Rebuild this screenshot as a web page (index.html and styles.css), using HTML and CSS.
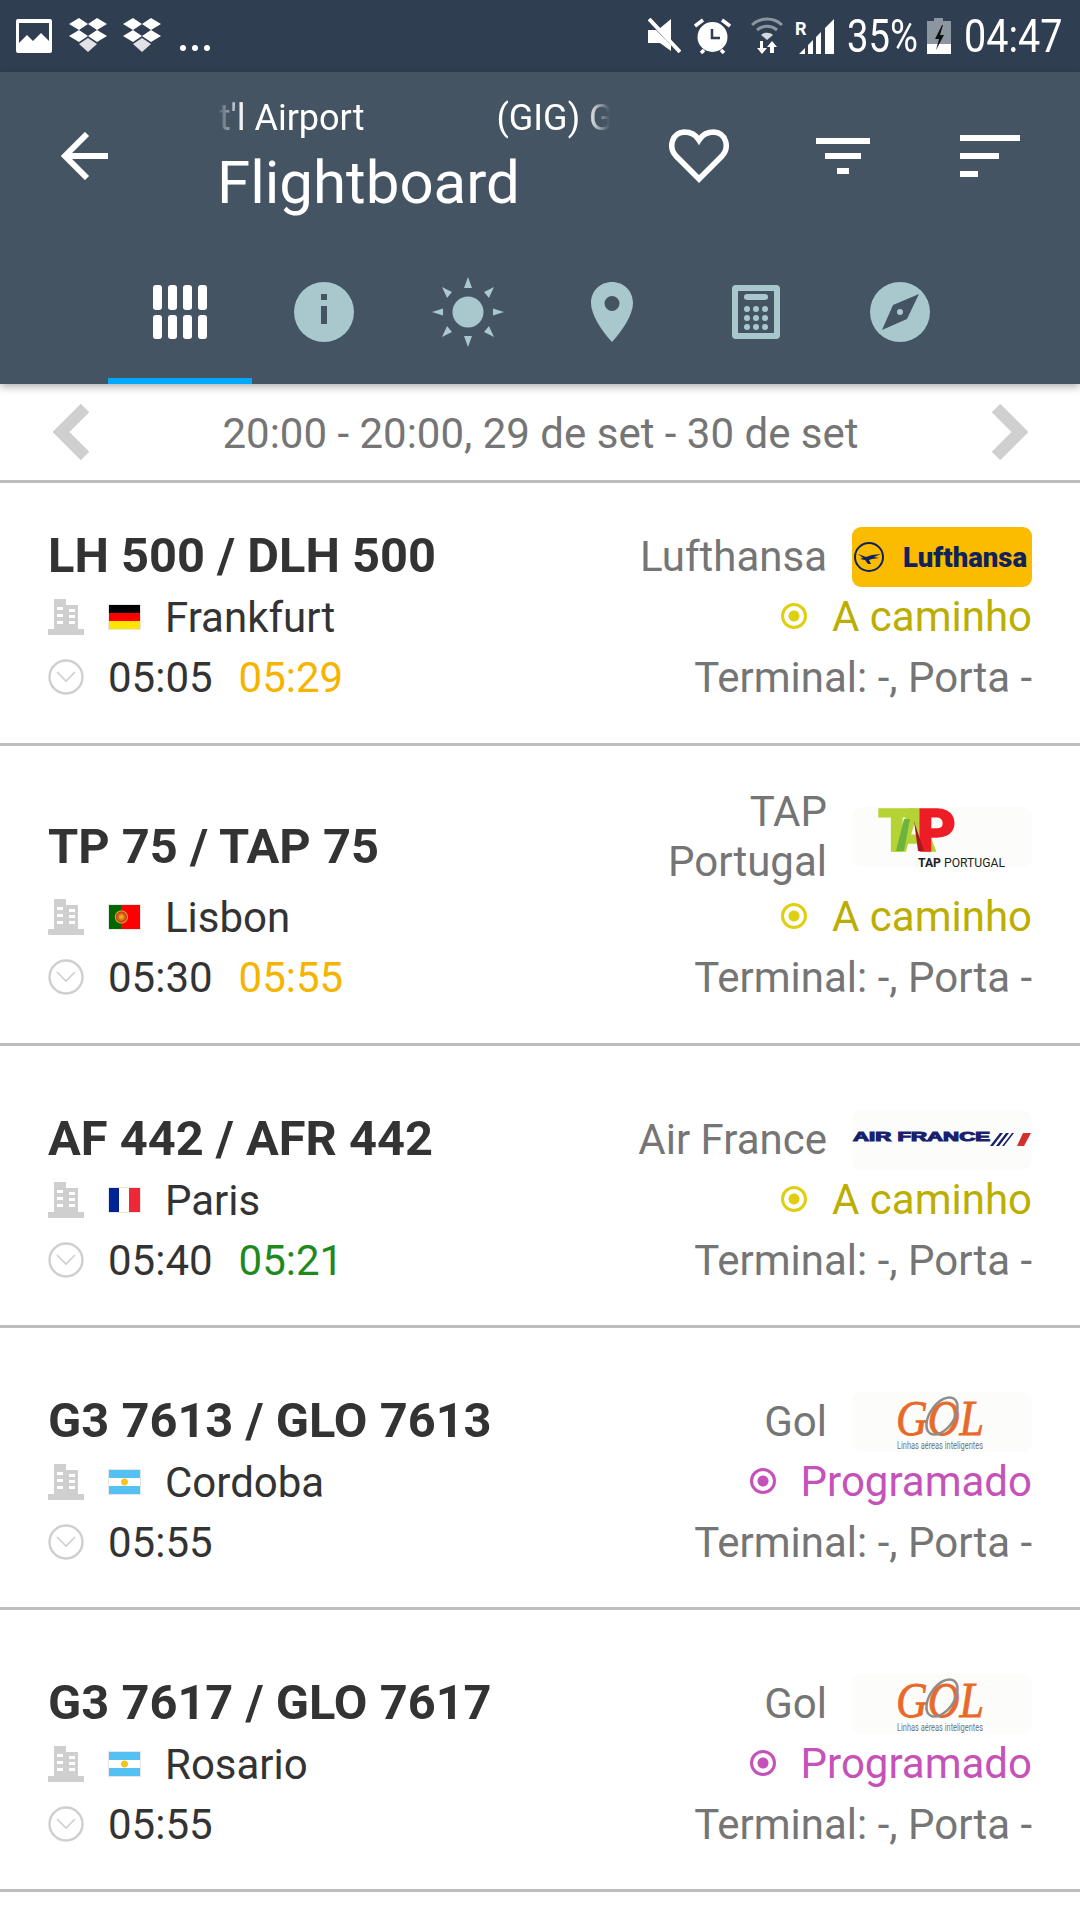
FILE: index.html
```html
<!DOCTYPE html>
<html lang="pt">
<head>
    <meta charset="UTF-8">
    <meta name="viewport" content="width=device-width, initial-scale=1.0">
    <title>Flightboard</title>
    <link rel="stylesheet" href="styles.css">
</head>
<body>
    <svg class="sprites" width="0" height="0">
        <symbol id="building" viewBox="0 0 36 36">
            <path fill="#cfcfcf" fill-rule="evenodd" d="M6 0h12v6h12v24h6v6H0v-6h6zM9 8v3h6V8zM9 15v3h6v-3zM21 10v3h6v-3zM9 22v3h6v-3zM21 16v3h6v-3zM21 22v3h6v-3z"/>
        </symbol>
        <symbol id="clock" viewBox="0 0 36 36">
            <circle cx="18" cy="18" r="16.500" fill="none" stroke="#cfcfcf" stroke-width="2.400"/>
            <path d="M9 13l9 9 9-9" fill="none" stroke="#cfcfcf" stroke-width="1.600"/>
        </symbol>
        <symbol id="dropbox" viewBox="0 0 38 36">
            <path fill="#fff" d="M10 0l9 6-9 6-10-6zM28 0l10 6-10 6-9-6zM10 12l9 6-9 6-10-6zM28 12l10 6-10 6-9-6z"/>
            <path fill="#fff" opacity=".85" d="M10 26l9-6 9 6-9 8z"/>
        </symbol>
    </svg>

    <div class="status-bar">
        <div class="status-group">
            <svg class="status-icon" width="36" height="34" viewBox="0 0 36 34"><path fill="#fff" fill-rule="evenodd" d="M2 0h32a2 2 0 0 1 2 2v30a2 2 0 0 1-2 2H2a2 2 0 0 1-2-2V2a2 2 0 0 1 2-2zM3 4v20l8-8 6 6 8-8 8 8V4z"/></svg>
            <svg class="status-icon status-gap" width="38" height="36"><use href="#dropbox"/></svg>
            <svg class="status-icon status-gap-small" width="38" height="36"><use href="#dropbox"/></svg>
            <span class="status-dots"><i></i><i></i><i></i></span>
        </div>
        <div class="status-group">
            <svg width="33" height="36" viewBox="0 0 33 36"><path fill="#fff" d="M23 1v22L11 11zM0 12h8l15 15v6l-11-8H0z"/><path stroke="#fff" stroke-width="4" d="M1 1l31 33"/></svg>
            <svg class="alarm" width="37" height="36" viewBox="0 0 37 36"><circle cx="18.500" cy="19" r="15" fill="#fff"/><path stroke="#fff" stroke-width="3.500" d="M1 8l8-6M36 8l-8-6M7 35l3-3M30 35l-3-3"/><path fill="none" stroke="#2f3e50" stroke-width="2.500" d="M18 11v9h8"/></svg>
            <svg class="wifi" width="32" height="38" viewBox="0 0 32 38"><path fill="none" stroke="#8c96a1" stroke-width="3" d="M1 8c8-8 22-8 30 0M6 13c6-5 14-5 20 0"/><path fill="#d5d8dc" d="M10 18c3-3 9-3 12 0l-6 5z"/><path fill="#fff" d="M9 24h3v7h4l-5 6-5-6h3zM21 24l5 6h-3v6h-4v-6h-3z"/></svg>
            <span class="roaming">R</span>
            <svg class="signal" width="36" height="36" viewBox="0 0 36 36"><path fill="#fff" d="M0 36l6-6v6zM9 36v-9l5-5v14zM17 36V19l5-5v22zM26 36V10l9-9v35z"/></svg>
            <span class="status-text status-battery">35%</span>
            <svg class="battery" width="24" height="36" viewBox="0 0 24 36"><path fill="#8c96a1" d="M7 0h9v3h8v33H0V3h7z"/><path fill="#fff" d="M0 26h24v10H0z"/><path fill="#111" d="M15 7l-7 14h4l-3 11 8-15h-4l3-10z"/></svg>
            <span class="status-text status-time">04:47</span>
        </div>
    </div>

    <div class="toolbar">
        <div class="app-header">
            <div class="icon-slot back-slot">
                <svg width="48" height="48" viewBox="0 0 48 48"><path fill="none" stroke="#fff" stroke-width="6" d="M48 24H5M27 2L5 24l22 22"/></svg>
            </div>
            <div class="title-block">
                <div class="subtitle"><div class="subtitle-text">Int'l Airport<span class="subtitle-code">(GIG) Galeão</span></div></div>
                <div class="title">Flightboard</div>
            </div>
            <div class="icon-slot heart-slot">
                <svg width="60" height="54" viewBox="0 0 60 54"><path fill="none" stroke="#fff" stroke-width="5.500" d="M30 50L7 27C-1 18 3 4 15 3c7 0 12 3 15 8 3-5 8-8 15-8 12 1 16 15 8 24z"/></svg>
            </div>
            <div class="icon-slot filter-slot">
                <svg width="54" height="36" viewBox="0 0 54 36"><path fill="#fff" d="M0 0h54v6H0zM9 15h36v6H9zM21 30h12v6H21z"/></svg>
            </div>
            <div class="icon-slot sort-slot">
                <svg width="60" height="42" viewBox="0 0 60 42"><path fill="#fff" d="M0 0h60v6H0zM0 18h39v6H0zM0 36h18v6H0z"/></svg>
            </div>
        </div>
        <div class="tabs">
            <div class="tab tab-active">
                <svg width="72" height="72" viewBox="0 0 72 72"><g fill="#fff"><rect x="9" y="9" width="9" height="25" rx="3"/><rect x="24" y="9" width="9" height="25" rx="3"/><rect x="39" y="9" width="9" height="25" rx="3"/><rect x="54" y="9" width="9" height="25" rx="3"/><rect x="9" y="39" width="9" height="24" rx="3"/><rect x="24" y="39" width="9" height="24" rx="3"/><rect x="39" y="39" width="9" height="24" rx="3"/><rect x="54" y="39" width="9" height="24" rx="3"/></g></svg>
            </div>
            <div class="tab">
                <svg width="72" height="72" viewBox="0 0 72 72"><circle cx="36" cy="36" r="30" fill="#a9c8ce"/><path fill="#445463" d="M33 18h6v6h-6zM33 30h6v18h-6z"/></svg>
            </div>
            <div class="tab">
                <svg width="72" height="72" viewBox="0 0 72 72"><g fill="#a9c8ce"><circle cx="36" cy="36" r="15.500"/><path d="M36 1l4 11h-8zM36 71l-4-11h8zM0 36l11-3.500v7zM72 36l-11 3.500v-7zM10 11l10 5-5 6zM62 11l-5 11-5-6zM10 61l5-11 5 6zM62 61l-10-5 5-6z"/></g></svg>
            </div>
            <div class="tab">
                <svg width="72" height="72" viewBox="0 0 72 72"><path fill="#a9c8ce" fill-rule="evenodd" d="M36 6c12 0 21 9 21 21 0 12-11 28-21 39C26 55 15 39 15 27 15 15 24 6 36 6zm0 14a7.500 7.500 0 1 0 0 15 7.500 7.500 0 0 0 0-15z"/></svg>
            </div>
            <div class="tab">
                <svg width="72" height="72" viewBox="0 0 72 72"><path fill="#a9c8ce" fill-rule="evenodd" d="M16 9h40a4 4 0 0 1 4 4v46a4 4 0 0 1-4 4H16a4 4 0 0 1-4-4V13a4 4 0 0 1 4-4zm2 6v42h36V15z"/><rect x="24" y="18" width="24" height="6" rx="3" fill="#a9c8ce"/><g fill="#a9c8ce"><circle cx="27" cy="33" r="3"/><circle cx="36" cy="33" r="3"/><circle cx="45" cy="33" r="3"/><circle cx="27" cy="42" r="3"/><circle cx="36" cy="42" r="3"/><circle cx="45" cy="42" r="3"/><circle cx="27" cy="51" r="3"/><circle cx="36" cy="51" r="3"/><circle cx="45" cy="51" r="3"/></g></svg>
            </div>
            <div class="tab">
                <svg width="72" height="72" viewBox="0 0 72 72"><circle cx="36" cy="36" r="30" fill="#a9c8ce"/><path fill="#445463" fill-rule="evenodd" d="M55 18l-12 25-25 11 11-25zM36 33a3 3 0 1 0 0 6 3 3 0 0 0 0-6z"/></svg>
            </div>
        </div>
    </div>

    <div class="date-bar">
        <svg width="36" height="56" viewBox="0 0 36 56"><path fill="none" stroke="#cfcfcf" stroke-width="12" d="M32 4L8 28l24 24"/></svg>
        <div class="date-range">20:00 - 20:00, 29 de set - 30 de set</div>
        <svg width="36" height="56" viewBox="0 0 36 56"><path fill="none" stroke="#cfcfcf" stroke-width="12" d="M4 4l24 24L4 52"/></svg>
    </div>

    <div class="flight-list">
        <div class="flight flight-first">
            <div class="flight-number">LH 500 / DLH 500</div>
            <div class="airline">
                <span class="airline-name">Lufthansa</span>
                <svg class="logo" width="180" height="60" viewBox="0 0 180 60">
                    <rect width="180" height="60" rx="9" fill="#fbbc00"/>
                    <circle cx="17" cy="30" r="14" fill="none" stroke="#10225c" stroke-width="2"/>
                    <path fill="#10225c" d="M6 27l8 3 6-2 9-1-7 3 5 1-7 1-3 1 2 4-3 0-3-4-5-1 3-1z"/>
                    <text x="51" y="40" font-family="Roboto" font-weight="900" font-size="27" fill="#10225c" textLength="124" lengthAdjust="spacingAndGlyphs">Lufthansa</text>
                </svg>
            </div>
            <div class="flight-line">
                <svg class="line-icon" width="36" height="36"><use href="#building"/></svg>
                <span class="flag flag-de"></span>
                <span>Frankfurt</span>
            </div>
            <div class="flight-status status-enroute"><span class="status-dot"></span>A caminho</div>
            <div class="flight-line">
                <svg class="line-icon" width="36" height="36"><use href="#clock"/></svg>
                <span>05:05</span><span class="time-late">05:29</span>
            </div>
            <div class="terminal">Terminal: -, Porta -</div>
        </div>

        <div class="flight flight-tall">
            <div class="flight-number">TP 75 / TAP 75</div>
            <div class="airline">
                <span class="airline-name">TAP<br>Portugal</span>
                <svg class="logo" width="180" height="60" viewBox="0 0 180 60">
                    <rect width="180" height="60" rx="9" fill="#fcfdfb"/>
                    <text x="26" y="44" font-family="Roboto" font-weight="900" font-size="60" stroke-width="1.500" textLength="78" lengthAdjust="spacing"><tspan fill="#b5d334" stroke="#b5d334">TA</tspan><tspan fill="#ee1c25" stroke="#ee1c25">P</tspan></text>
                    <path fill="#6cb33f" d="M44 44l8-32h6l-6 32z"/>
                    <path fill="#a81820" d="M66 44l-4-30 10 30z"/>
                    <text x="66" y="60" font-family="Roboto" font-size="13" fill="#222" textLength="87" lengthAdjust="spacingAndGlyphs"><tspan font-weight="700">TAP</tspan> PORTUGAL</text>
                </svg>
            </div>
            <div class="flight-line">
                <svg class="line-icon" width="36" height="36"><use href="#building"/></svg>
                <span class="flag flag-pt"></span>
                <span>Lisbon</span>
            </div>
            <div class="flight-status status-enroute"><span class="status-dot"></span>A caminho</div>
            <div class="flight-line">
                <svg class="line-icon" width="36" height="36"><use href="#clock"/></svg>
                <span>05:30</span><span class="time-late">05:55</span>
            </div>
            <div class="terminal">Terminal: -, Porta -</div>
        </div>

        <div class="flight">
            <div class="flight-number">AF 442 / AFR 442</div>
            <div class="airline">
                <span class="airline-name">Air France</span>
                <svg class="logo" width="180" height="60" viewBox="0 0 180 60">
                    <rect width="180" height="60" rx="9" fill="#fcfdfb"/>
                    <text x="1" y="31" font-family="Liberation Sans" font-weight="700" font-size="12" stroke="#1a1f6e" stroke-width="1" fill="#1a1f6e" textLength="137" lengthAdjust="spacingAndGlyphs">AIR FRANCE</text>
                    <path fill="#1a1f6e" d="M138 36l10-13h3l-10 13zM144 36l10-13h3l-10 13zM150 36l10-13h2l-10 13z"/>
                    <path fill="#d32f2f" d="M165 36l6-13h8l-7 13z"/>
                </svg>
            </div>
            <div class="flight-line">
                <svg class="line-icon" width="36" height="36"><use href="#building"/></svg>
                <span class="flag flag-fr"></span>
                <span>Paris</span>
            </div>
            <div class="flight-status status-enroute"><span class="status-dot"></span>A caminho</div>
            <div class="flight-line">
                <svg class="line-icon" width="36" height="36"><use href="#clock"/></svg>
                <span>05:40</span><span class="time-early">05:21</span>
            </div>
            <div class="terminal">Terminal: -, Porta -</div>
        </div>

        <div class="flight">
            <div class="flight-number">G3 7613 / GLO 7613</div>
            <div class="airline">
                <span class="airline-name">Gol</span>
                <svg class="logo" width="180" height="60" viewBox="0 0 180 60">
                    <rect width="180" height="60" rx="9" fill="#fcfdfb"/>
                    <text x="44" y="43" font-family="Liberation Serif" font-style="italic" font-size="50" stroke="#e8692a" stroke-width=".8" fill="#e8692a" textLength="88" lengthAdjust="spacingAndGlyphs">GOL</text>
                    <ellipse cx="90" cy="24" rx="12" ry="21" transform="rotate(35 90 24)" fill="none" stroke="#8d8d8d" stroke-width="2.500"/>
                    <text x="45" y="57" font-family="Roboto" font-size="10" fill="#777" textLength="86" lengthAdjust="spacingAndGlyphs">Linhas aéreas inteligentes</text>
                </svg>
            </div>
            <div class="flight-line">
                <svg class="line-icon" width="36" height="36"><use href="#building"/></svg>
                <span class="flag flag-ar"></span>
                <span>Cordoba</span>
            </div>
            <div class="flight-status status-scheduled"><span class="status-dot"></span>Programado</div>
            <div class="flight-line">
                <svg class="line-icon" width="36" height="36"><use href="#clock"/></svg>
                <span>05:55</span>
            </div>
            <div class="terminal">Terminal: -, Porta -</div>
        </div>

        <div class="flight">
            <div class="flight-number">G3 7617 / GLO 7617</div>
            <div class="airline">
                <span class="airline-name">Gol</span>
                <svg class="logo" width="180" height="60" viewBox="0 0 180 60">
                    <rect width="180" height="60" rx="9" fill="#fcfdfb"/>
                    <text x="44" y="43" font-family="Liberation Serif" font-style="italic" font-size="50" stroke="#e8692a" stroke-width=".8" fill="#e8692a" textLength="88" lengthAdjust="spacingAndGlyphs">GOL</text>
                    <ellipse cx="90" cy="24" rx="12" ry="21" transform="rotate(35 90 24)" fill="none" stroke="#8d8d8d" stroke-width="2.500"/>
                    <text x="45" y="57" font-family="Roboto" font-size="10" fill="#777" textLength="86" lengthAdjust="spacingAndGlyphs">Linhas aéreas inteligentes</text>
                </svg>
            </div>
            <div class="flight-line">
                <svg class="line-icon" width="36" height="36"><use href="#building"/></svg>
                <span class="flag flag-ar"></span>
                <span>Rosario</span>
            </div>
            <div class="flight-status status-scheduled"><span class="status-dot"></span>Programado</div>
            <div class="flight-line">
                <svg class="line-icon" width="36" height="36"><use href="#clock"/></svg>
                <span>05:55</span>
            </div>
            <div class="terminal">Terminal: -, Porta -</div>
        </div>
    </div>
</body>
</html>
```

FILE: styles.css
```css
body {
    margin: 0;
    padding: 0;
    font-family: Roboto, "Noto Sans", sans-serif;
    background-color: white;
    color: rgb(51, 51, 51);
}
svg {
    display: block;
}
.sprites {
    position: absolute;
}

/* Status bar */
.status-bar {
    display: flex;
    justify-content: space-between;
    align-items: center;
    height: 72px;
    padding: 0 20px 0 16px;
    background-color: #2f3e50;
    color: white;
}
.status-group {
    display: flex;
    align-items: center;
}
.status-gap {
    margin-left: 17px;
}
.status-gap-small {
    margin-left: 16px;
}
.status-dots {
    display: flex;
    gap: 6px;
    margin: 24px 0 0 19px;
}
.status-dots i {
    width: 6px;
    height: 6px;
    border-radius: 50%;
    background-color: white;
}
.alarm {
    margin-left: 13px;
}
.wifi {
    margin-left: 20px;
}
.roaming {
    width: 12px;
    margin: -16px 0 0 12px;
    font-size: 18px;
    font-weight: 700;
}
.signal {
    margin-left: -8px;
}
.status-text {
    display: inline-block;
    font-size: 46px;
    line-height: 72px;
    transform-origin: left center;
}
.status-battery {
    width: 70px;
    margin-left: 12px;
    transform: scaleX(0.83);
}
.battery {
    margin-left: 10px;
}
.status-time {
    width: 96px;
    margin-left: 13px;
    transform: scaleX(0.86);
}

/* Toolbar */
.toolbar {
    position: relative;
    height: 312px;
    background-color: #445463;
    box-shadow: 0 3px 8px rgba(0, 0, 0, 0.3);
}
.app-header {
    display: flex;
    align-items: flex-start;
    height: 198px;
    color: white;
}
.icon-slot {
    display: flex;
    align-items: center;
    height: 60px;
    margin-top: 54px;
}
.back-slot {
    margin-left: 60px;
}
.title-block {
    width: 393px;
    margin: 23px 0 0 109px;
}
.subtitle {
    height: 46px;
    overflow: hidden;
    -webkit-mask-image: linear-gradient(to right, transparent, black 26px, black 370px, transparent);
    mask-image: linear-gradient(to right, transparent, black 26px, black 370px, transparent);
}
.subtitle-text {
    margin-left: -28px;
    font-size: 36px;
    line-height: 46px;
    white-space: nowrap;
}
.subtitle-code {
    margin-left: 132px;
}
.title {
    font-size: 60px;
    line-height: 84px;
}
.heart-slot {
    margin-left: 59px;
}
.filter-slot {
    margin-left: 87px;
}
.sort-slot {
    margin-left: 90px;
}
.tabs {
    display: flex;
    padding-left: 108px;
}
.tab {
    display: flex;
    justify-content: center;
    box-sizing: border-box;
    width: 144px;
    height: 114px;
    padding-top: 6px;
}
.tab-active {
    border-bottom: 6px solid #00a8ff;
}

/* Date selector */
.date-bar {
    display: flex;
    align-items: center;
    justify-content: space-between;
    height: 96px;
    padding: 0 52px 0 53px;
    border-bottom: 3px solid #bdbdbd;
}
.date-range {
    padding-top: 2px;
    font-size: 42px;
    color: #757575;
}

/* Flights */
.flight {
    display: grid;
    grid-template-columns: 1fr auto;
    grid-auto-rows: 60px;
    align-items: center;
    padding: 64px 48px 35px;
    border-bottom: 3px solid #bdbdbd;
    font-size: 42px;
}
.flight-first {
    padding: 44px 48px 36px;
}
.flight-tall {
    grid-template-rows: 100px 60px 60px;
    padding: 41px 48px 36px;
}
.flight-tall .flight-number {
    padding-top: 22px;
}
.flight-number {
    padding-bottom: 3px;
    font-size: 48.800px;
    font-weight: 700;
}
.airline {
    display: flex;
    align-items: center;
    justify-content: flex-end;
    gap: 25px;
}
.airline-name {
    color: #757575;
    text-align: right;
    line-height: 50px;
}
.flight-line {
    display: flex;
    align-items: center;
}
.line-icon {
    margin-right: 24px;
}
.flag {
    width: 33px;
    height: 26px;
    margin-right: 24px;
    box-sizing: border-box;
    border: 1px solid #e6e6e6;
}
.flag-de {
    background: linear-gradient(#000 33%, #f00 33%, #f00 66%, #ffe600 66%);
}
.flag-pt {
    background: radial-gradient(circle at 40% 50%, #f5d000 0, #c9332b 5px, #e0b020 6px, transparent 7px), linear-gradient(to right, #060 40%, #f00 40%);
}
.flag-fr {
    background: linear-gradient(to right, #002395 33%, #fff 33%, #fff 66%, #ed2939 66%);
}
.flag-ar {
    background: radial-gradient(circle, #f5c518 3px, transparent 4px), linear-gradient(#55c0f2 33%, #fff 33%, #fff 66%, #55c0f2 66%);
}
.time-late {
    margin-left: 26px;
    color: #f5b400;
}
.time-early {
    margin-left: 26px;
    color: #1e8a1e;
}
.flight-status {
    display: flex;
    align-items: center;
    justify-content: flex-end;
    padding-bottom: 2px;
}
.status-dot {
    box-sizing: border-box;
    width: 26px;
    height: 26px;
    margin-right: 25px;
    border: 3.500px solid currentColor;
    border-radius: 50%;
    background: radial-gradient(circle, currentColor 5px, transparent 6px);
}
.status-enroute {
    color: #bcae00;
}
.status-enroute .status-dot {
    color: #e0cf10;
}
.status-scheduled {
    color: #c552b8;
}
.terminal {
    text-align: right;
    color: #757575;
}
```
